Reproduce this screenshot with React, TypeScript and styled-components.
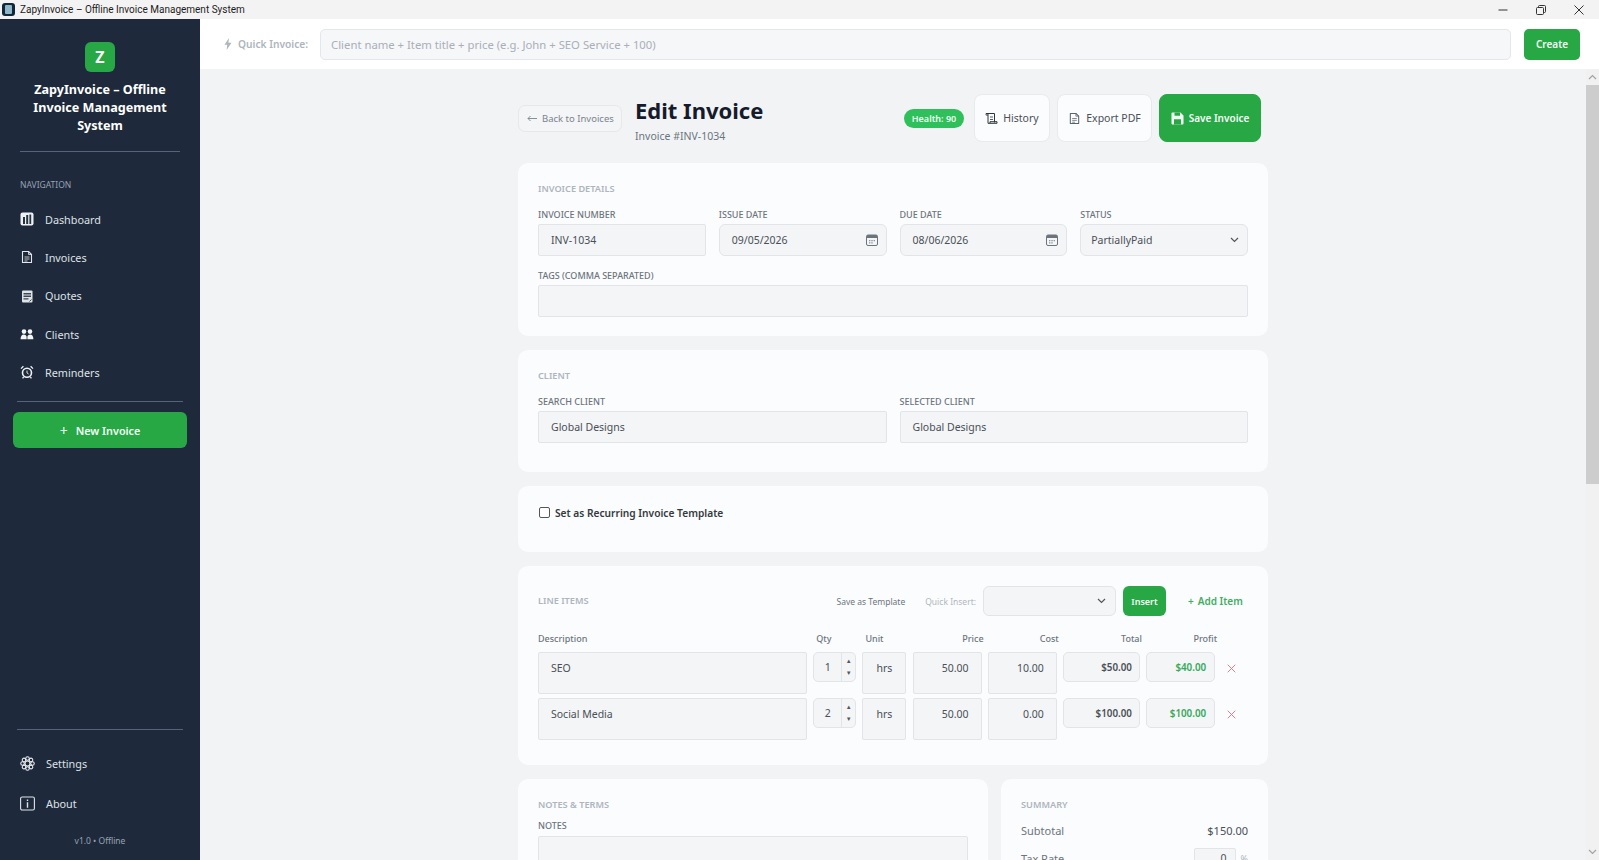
import { ReactNode } from 'react'
import styled, { createGlobalStyle } from 'styled-components'

const GlobalStyle = createGlobalStyle`
  html, body {
    margin: 0;
    height: 100%;
    overflow: hidden;
  }
  body {
    font-family: "Noto Sans", "Open Sans", "Liberation Sans", sans-serif;
    color: #212529;
    background: #f1f3f5;
  }
  * {
    box-sizing: border-box;
  }
`

const Window = styled.div`
  display: flex;
  flex-direction: column;
  height: 100vh;
  overflow: hidden;
`

const TitleBar = styled.header`
  display: flex;
  align-items: center;
  flex: 0 0 19px;
  padding-right: 1px;
  background: #f3f3f3;
  font-family: Roboto, "Noto Sans", sans-serif;
  font-size: 10px;
  color: #1c1c1c;
`

const AppGlyph = styled.span`
  display: flex;
  align-items: center;
  justify-content: center;
  width: 13px;
  height: 13px;
  margin: 0 5px 0 2px;
  border-radius: 3px;
  background: #13273a;
`

const AppGlyphInner = styled.span`
  width: 7px;
  height: 9px;
  border-radius: 1px;
  background: #8fb6c9;
`

const WindowTitle = styled.span`
  flex: 1;
`

const WindowButton = styled.span`
  display: flex;
  align-items: center;
  justify-content: center;
  width: 38px;
  height: 19px;
  color: #333;
`

const Body = styled.div`
  display: flex;
  flex: 1;
  min-height: 0;
`

const Sidebar = styled.aside`
  display: flex;
  flex-direction: column;
  flex: 0 0 200px;
  background: #1e2a3b;
  color: #e9ecef;
`

const Brand = styled.div`
  display: flex;
  flex-direction: column;
  align-items: center;
  padding: 23px 20px 0;
`

const LogoMark = styled.div`
  display: flex;
  align-items: center;
  justify-content: center;
  width: 30px;
  height: 30px;
  border-radius: 6px;
  background: #28a745;
  color: #fff;
  font-size: 16px;
  font-weight: 700;
`

const BrandName = styled.div`
  margin-top: 9px;
  font-size: 12.6px;
  line-height: 18px;
  font-weight: 700;
  text-align: center;
  color: #fff;
`

const Rule = styled.hr<{ $inset: number; $top: number }>`
  align-self: stretch;
  height: 1px;
  margin: ${({ $top }) => $top}px ${({ $inset }) => $inset}px 0;
  border: 0;
  background: #56637a;
`

const NavHeading = styled.div`
  margin: 27px 0 9px 20px;
  font-size: 8.5px;
  line-height: 12px;
  color: #98a2b3;
`

const NavList = styled.nav`
  display: flex;
  flex-direction: column;
`

const NavItem = styled.a`
  display: flex;
  align-items: center;
  gap: 11px;
  height: 38.3px;
  padding-left: 20px;
  font-size: 10.8px;
  color: #dee2e6;
`

const NewInvoice = styled.button`
  display: flex;
  align-items: center;
  justify-content: center;
  gap: 8px;
  height: 36px;
  margin: 10px 13px 0;
  border: 0;
  border-radius: 6px;
  background: #28a745;
  color: #f2fff5;
  font: 600 10.8px "Noto Sans", sans-serif;
`

const PlusMark = styled.span`
  font-size: 14px;
  font-weight: 400;
`

const SidebarFooter = styled.div`
  display: flex;
  flex-direction: column;
  margin-top: auto;
`

const FooterItem = styled(NavItem)`
  height: 40px;
`

const FooterList = styled.div`
  display: flex;
  flex-direction: column;
  margin-top: 13px;
`

const Version = styled.div`
  margin: 12px 0 13px;
  font-size: 8.5px;
  line-height: 12px;
  text-align: center;
  color: #98a2b3;
`

const Workspace = styled.div`
  display: flex;
  flex-direction: column;
  flex: 1;
  min-width: 0;
`

const TopBar = styled.div`
  display: flex;
  align-items: center;
  flex: 0 0 50px;
  padding: 0 19px 0 24px;
  background: #fff;
`

const QuickLabel = styled.span`
  display: flex;
  align-items: center;
  gap: 6px;
  margin-right: 12px;
  font-size: 10.2px;
  font-weight: 600;
  color: #adb5bd;
`

const QuickInput = styled.div`
  display: flex;
  align-items: center;
  flex: 1;
  height: 31px;
  padding: 0 10px;
  border: 1px solid #e3e6ea;
  border-radius: 5px;
  background: #f6f7f9;
  font-size: 11.3px;
  color: #a9afb6;
`

const GreenButton = styled.button<{ $w: number; $h: number; $r: number }>`
  flex: 0 0 ${({ $w }) => $w}px;
  height: ${({ $h }) => $h}px;
  padding: 0;
  border: 0;
  border-radius: ${({ $r }) => $r}px;
  background: #28a745;
  color: #f2fff5;
  font: 600 9px "Noto Sans", sans-serif;
`

const CreateButton = styled(GreenButton)`
  margin-left: 13px;
  font-size: 10px;
`

const ContentRow = styled.div`
  display: flex;
  flex: 1;
  min-height: 0;
`

const Scroller = styled.main`
  flex: 1;
  min-width: 0;
  overflow: hidden;
  background: #f1f3f5;
`

const Page = styled.div`
  display: flex;
  flex-direction: column;
  gap: 14px;
  width: 750px;
  margin: 0 auto;
  padding-top: 25px;
`

const PageHead = styled.div`
  display: flex;
  align-items: flex-start;
  height: 48px;
  margin-bottom: 7px;
  padding-right: 7px;
`

const BackButton = styled.button`
  display: flex;
  align-items: center;
  gap: 5px;
  width: 104px;
  height: 27px;
  margin: 11px 13px 0 0;
  padding: 0 0 0 8px;
  border: 1px solid #e6e8ec;
  border-radius: 7px;
  background: #f4f5f7;
  color: #7b838c;
  font: 400 9.5px "Noto Sans", sans-serif;
`

const TitleBlock = styled.div`
  flex: 1;
`

const PageTitle = styled.h1`
  margin: 0 0 2px;
  font-size: 22px;
  line-height: 33px;
  font-weight: 700;
  color: #161b2b;
`

const PageSub = styled.div`
  font-size: 10.5px;
  line-height: 14px;
  color: #6c757d;
`

const HealthPill = styled.span`
  display: flex;
  align-items: center;
  justify-content: center;
  width: 60px;
  height: 19px;
  margin: 15px 3px 0 0;
  border-radius: 10px;
  background: #2fbf5b;
  color: #e9fff0;
  font-size: 9px;
  font-weight: 600;
`

const HeadButton = styled.button<{ $w: number; $primary?: boolean }>`
  display: flex;
  align-items: center;
  justify-content: center;
  gap: 5px;
  flex: 0 0 ${({ $w }) => $w}px;
  height: 48px;
  margin-left: 7px;
  padding: 0;
  border: 1px solid ${({ $primary }) => ($primary ? '#28a745' : '#e8eaee')};
  border-radius: 8px;
  background: ${({ $primary }) => ($primary ? '#28a745' : '#fbfcfd')};
  color: ${({ $primary }) => ($primary ? '#f2fff5' : '#495057')};
  font: ${({ $primary }) => ($primary ? 600 : 400)} ${({ $primary }) => ($primary ? 10 : 10.5)}px "Noto Sans", sans-serif;
`

const Card = styled.section<{ $pb?: number }>`
  padding: 20px 20px ${({ $pb }) => $pb ?? 20}px;
  border-radius: 10px;
  background: #fbfcfd;
`

const CardTitle = styled.h2<{ $mb?: number }>`
  margin: 0 0 ${({ $mb }) => $mb ?? 14}px;
  font-size: 9.2px;
  line-height: 12px;
  font-weight: 600;
  color: #adb5bd;
  text-transform: uppercase;
`

const FieldGrid = styled.div<{ $cols: number }>`
  display: grid;
  grid-template-columns: repeat(${({ $cols }) => $cols}, 1fr);
  gap: 14px 13px;
`

const Field = styled.div<{ $span?: number }>`
  display: flex;
  flex-direction: column;
  grid-column: span ${({ $span }) => $span ?? 1};
`

const FieldLabel = styled.label`
  margin-bottom: 3px;
  font-size: 9px;
  line-height: 12px;
  font-weight: 500;
  color: #6c757d;
  text-transform: uppercase;
`

const InputBox = styled.div<{ $r?: number; $h?: number; $right?: boolean; $bold?: boolean; $green?: boolean; $top?: boolean; $px?: number; $pr?: number }>`
  display: flex;
  align-items: ${({ $top }) => ($top ? 'flex-start' : 'center')};
  justify-content: ${({ $right }) => ($right ? 'flex-end' : 'space-between')};
  height: ${({ $h }) => $h ?? 32}px;
  padding: ${({ $top }) => ($top ? '8px' : '0')} ${({ $px, $pr }) => $pr ?? $px ?? 12}px 0 ${({ $px }) => $px ?? 12}px;
  border: 1px solid #e2e4e8;
  border-radius: ${({ $r }) => $r ?? 2}px;
  background: #f4f5f6;
  font-size: ${({ $bold }) => ($bold ? 9.8 : 10.5)}px;
  font-weight: ${({ $bold }) => ($bold ? 600 : 400)};
  color: ${({ $green }) => ($green ? '#36a85a' : '#495057')};
`

const CheckRow = styled.label`
  display: flex;
  align-items: center;
  gap: 5px;
  height: 13px;
  margin: 0 0 13px 1px;
  font-size: 10.2px;
  font-weight: 600;
  color: #343a40;
`

const CheckBox = styled.span`
  width: 11px;
  height: 11px;
  border: 1px solid #555;
  border-radius: 2px;
  background: #fff;
`

const ItemsBar = styled.div`
  display: flex;
  align-items: center;
  height: 30px;
  margin-bottom: 17px;
`

const ItemsTitle = styled(CardTitle)`
  flex: 1;
  margin: 0;
`

const BarText = styled.span<{ $muted?: boolean; $gap: number }>`
  margin-right: ${({ $gap }) => $gap}px;
  font-size: 8.5px;
  color: ${({ $muted }) => ($muted ? '#b0b6bd' : '#6c757d')};
`

const SelectBox = styled(InputBox)`
  flex: 0 0 133px;
  margin-right: 7px;
`

const AddItem = styled.span`
  display: flex;
  gap: 4px;
  width: 54px;
  margin: 0 6px 0 22px;
  font-size: 10px;
  font-weight: 600;
  white-space: nowrap;
  color: #3fae63;
`

const ItemGrid = styled.div`
  display: grid;
  grid-template-columns: 269px 43px 44px 69px 69px 77px 69px 1fr;
  column-gap: 6.2px;
  align-items: start;
`

const HeadCell = styled.div<{ $right?: boolean; $pl?: number }>`
  height: 12px;
  margin-bottom: 7px;
  margin-right: ${({ $right }) => ($right ? '-2px' : '0')};
  padding-left: ${({ $pl }) => $pl ?? 0}px;
  font-size: 9px;
  line-height: 12px;
  font-weight: 500;
  text-align: ${({ $right }) => ($right ? 'right' : 'left')};
  color: #6c757d;
`

const ItemRows = styled.div`
  display: flex;
  flex-direction: column;
  gap: 4px;
`

const Stepper = styled.div`
  display: flex;
  height: 30px;
  border: 1px solid #e2e4e8;
  border-radius: 5px;
  background: #f4f5f6;
  font-size: 10.5px;
  color: #495057;
`

const StepValue = styled.span`
  display: flex;
  align-items: center;
  justify-content: center;
  flex: 1;
`

const StepArrows = styled.span`
  display: flex;
  flex-direction: column;
  align-items: center;
  justify-content: space-evenly;
  flex: 0 0 14px;
  border-left: 1px solid #e2e4e8;
  font-size: 6px;
  line-height: 6px;
  color: #555;
`

const CenterText = styled.span`
  flex: 1;
  text-align: center;
`

const RemoveCell = styled.div`
  display: flex;
  padding: 12px 0 0 6px;
`

const BottomGrid = styled.div`
  display: grid;
  grid-template-columns: 470px 267px;
  gap: 13px;
`

const NotesLabel = styled(FieldLabel)`
  display: block;
  margin: -5px 0 4px;
`

const SummaryRow = styled.div`
  display: flex;
  align-items: center;
  justify-content: space-between;
  margin-bottom: 10px;
  font-size: 11px;
  color: #6c757d;
`

const SummaryValue = styled.span`
  font-size: 11px;
  color: #495057;
`

const TaxInput = styled(InputBox)`
  width: 42px;
  margin-left: auto;
  margin-right: 5px;
`

const TaxCell = styled.span`
  display: flex;
  align-items: center;
  flex: 1;
  font-size: 9px;
  color: #adb5bd;
`

const ScrollRail = styled.div`
  display: flex;
  flex-direction: column;
  flex: 0 0 13px;
  background: #f1f1f1;
`

const ScrollArrow = styled.span<{ $end?: boolean }>`
  display: flex;
  align-items: center;
  justify-content: center;
  flex: 0 0 16px;
  margin-top: ${({ $end }) => ($end ? 'auto' : '0')};
  color: #a3a3a3;
`

const ScrollThumb = styled.span`
  flex: 0 0 399px;
  background: #cdcdcd;
`

const IconSlot = styled.svg`
  flex: none;
  display: block;
`

type IconProps = { size?: number; color?: string }

function DashboardIcon() {
  return (
    <IconSlot width="14" height="14" viewBox="0 0 14 14">
      <rect x="0.5" y="0.5" width="13" height="13" rx="2" fill="#eef1f4" />
      <path d="M3 5h2v7H3zM6.2 3h2v9h-2zM9.4 2.5h1.8v9.5H9.4z" fill="#26323f" />
    </IconSlot>
  )
}

function DocIcon({ size = 14, color = '#e4e8ec' }: IconProps) {
  return (
    <IconSlot width={size} height={size} viewBox="0 0 14 14" fill="none" stroke={color} strokeWidth="1.1">
      <path d="M2.5 1.5h6l3 3v8h-9z" strokeLinejoin="round" />
      <path d="M8.5 1.5v3h3M4.5 7h5M4.5 9h5M4.5 11h3" strokeWidth="0.8" />
    </IconSlot>
  )
}

function QuotesIcon() {
  return (
    <IconSlot width="14" height="14" viewBox="0 0 14 14">
      <rect x="2" y="1.5" width="10.5" height="12" rx="1" fill="#dfe3e8" />
      <path d="M3.5 4h7.5v1.4H3.5zM3.5 6.6h7.5V8H3.5zM3.5 9.2h5v1.2h-5z" fill="#3b4757" />
      <path d="M9.5 12.5l2-2" stroke="#3b4757" strokeWidth="1" />
    </IconSlot>
  )
}

function ClientsIcon() {
  return (
    <IconSlot width="14" height="14" viewBox="0 0 14 14" fill="#f3f5f7">
      <circle cx="4" cy="4.6" r="2.3" />
      <circle cx="10" cy="4.6" r="2.3" />
      <path d="M0.6 12.3c0-3 1.2-4.8 3.2-4.8 1.3 0 2.3.7 2.8 2v2.8zM7.4 12.3V9.5c.5-1.3 1.5-2 2.8-2 2 0 3.2 1.8 3.2 4.8z" />
    </IconSlot>
  )
}

function AlarmIcon() {
  return (
    <IconSlot width="14" height="14" viewBox="0 0 14 14" fill="none" stroke="#eef1f4">
      <circle cx="7" cy="7.8" r="4.5" strokeWidth="1.6" />
      <path d="M7 5.5v2.5l1.6 1" strokeWidth="0.9" />
      <path d="M1 3.6L3.4 1.2M13 3.6l-2.4-2.4M3.6 12l-1 1.3M10.4 12l1 1.3" strokeWidth="1.3" />
    </IconSlot>
  )
}

function SettingsIcon() {
  const petals = [0, 45, 90, 135, 180, 225, 270, 315]
  return (
    <IconSlot width="15" height="15" viewBox="0 0 16 16" fill="none" stroke="#eef1f4" strokeWidth="1.1">
      <circle cx="8" cy="8" r="2.6" />
      {petals.map((deg) => (
        <circle key={deg} cx="8" cy="2.7" r="1.9" transform={`rotate(${deg} 8 8)`} />
      ))}
    </IconSlot>
  )
}

function InfoIcon() {
  return (
    <IconSlot width="15" height="15" viewBox="0 0 15 15" fill="none" stroke="#dfe3e8">
      <rect x="0.6" y="1" width="13.8" height="13" rx="1.6" strokeWidth="1.1" />
      <path d="M7.5 3.5v1.6M7.5 6.3v5.4" strokeWidth="1.4" />
    </IconSlot>
  )
}

function BoltIcon() {
  return (
    <IconSlot width="8" height="12" viewBox="0 0 8 12">
      <path d="M5 0L0.5 6.8h2.8L2.6 12 7.5 4.8H4.4z" fill="#adb5bd" />
    </IconSlot>
  )
}

function ScrollIcon() {
  return (
    <IconSlot width="13" height="13" viewBox="0 0 13 13" fill="none" stroke="#30363c" strokeWidth="1">
      <path d="M1 1.5h8.5v9" />
      <path d="M3 1.5v9.8h9v-1.6H5v1.6" />
      <path d="M1 1.5v1.6h2M5 5h3M5 7.5h3" strokeWidth="0.8" />
    </IconSlot>
  )
}

function SaveIcon() {
  return (
    <IconSlot width="13" height="13" viewBox="0 0 13 13">
      <path d="M1.5 0.5h8l3 3v8a1 1 0 0 1-1 1h-10a1 1 0 0 1-1-1v-10a1 1 0 0 1 1-1z" fill="#f2fff5" />
      <path d="M3.5 0.5h5.5v3.2H3.5zM3 7.3h7v5.2H3z" fill="#28a745" />
    </IconSlot>
  )
}

function CalendarIcon() {
  return (
    <IconSlot width="12" height="12" viewBox="0 0 12 12">
      <rect x="0.5" y="1" width="11" height="10.5" rx="1.5" fill="none" stroke="#6c757d" />
      <path d="M0.5 2.5a1.5 1.5 0 0 1 1.5-1.5h8a1.5 1.5 0 0 1 1.5 1.5V4h-11z" fill="#6c757d" />
      <path d="M3 6h1.4v1.2H3zM5.3 6h1.4v1.2H5.3zM7.6 6H9v1.2H7.6zM3 8.2h1.4v1.2H3zM5.3 8.2h1.4v1.2H5.3z" fill="#8f969d" />
    </IconSlot>
  )
}

function BackArrow() {
  return (
    <IconSlot width="10" height="7" viewBox="0 0 10 7" fill="none" stroke="#7b838c" strokeWidth="0.9">
      <path d="M10 3.5H1M3.5 1L1 3.5 3.5 6" />
    </IconSlot>
  )
}

function ChevronDown({ color = '#555' }: IconProps) {
  return (
    <IconSlot width="9" height="6" viewBox="0 0 9 6" fill="none" stroke={color} strokeWidth="1.2">
      <path d="M1 1l3.5 3.5L8 1" />
    </IconSlot>
  )
}

function ChevronUp() {
  return (
    <IconSlot width="9" height="6" viewBox="0 0 9 6" fill="none" stroke="#a3a3a3" strokeWidth="1.2">
      <path d="M1 5l3.5-3.5L8 5" />
    </IconSlot>
  )
}

function RemoveIcon() {
  return (
    <IconSlot width="9" height="9" viewBox="0 0 9 9" stroke="#e57f87" strokeWidth="1">
      <path d="M0.7 0.7l7.6 7.6M8.3 0.7L0.7 8.3" />
    </IconSlot>
  )
}

function MinimizeIcon() {
  return (
    <IconSlot width="10" height="10" viewBox="0 0 10 10" stroke="currentColor">
      <path d="M0.5 5h9" />
    </IconSlot>
  )
}

function RestoreIcon() {
  return (
    <IconSlot width="10" height="10" viewBox="0 0 10 10" fill="none" stroke="currentColor">
      <rect x="0.5" y="2.5" width="7" height="7" rx="1" />
      <path d="M2.5 2.5V1.5a1 1 0 0 1 1-1h5a1 1 0 0 1 1 1v5a1 1 0 0 1-1 1h-1" />
    </IconSlot>
  )
}

function CloseIcon() {
  return (
    <IconSlot width="10" height="10" viewBox="0 0 10 10" stroke="currentColor">
      <path d="M0.5 0.5l9 9M9.5 0.5l-9 9" />
    </IconSlot>
  )
}

type LineItem = {
  description: string
  qty: number
  price: string
  cost: string
  total: string
  profit: string
}

const lineItems: LineItem[] = [
  { description: 'SEO', qty: 1, price: '50.00', cost: '10.00', total: '$50.00', profit: '$40.00' },
  { description: 'Social Media', qty: 2, price: '50.00', cost: '0.00', total: '$100.00', profit: '$100.00' },
]

const navItems: { label: string; icon: ReactNode }[] = [
  { label: 'Dashboard', icon: <DashboardIcon /> },
  { label: 'Invoices', icon: <DocIcon /> },
  { label: 'Quotes', icon: <QuotesIcon /> },
  { label: 'Clients', icon: <ClientsIcon /> },
  { label: 'Reminders', icon: <AlarmIcon /> },
]

function ItemRow({ item }: { item: LineItem }) {
  return (
    <ItemGrid>
      <InputBox $h={42} $top>{item.description}</InputBox>
      <Stepper>
        <StepValue>{item.qty}</StepValue>
        <StepArrows>
          <span>▲</span>
          <span>▼</span>
        </StepArrows>
      </Stepper>
      <InputBox $h={42} $top $px={4}><CenterText>hrs</CenterText></InputBox>
      <InputBox $h={42} $top $right>{item.price}</InputBox>
      <InputBox $h={42} $top $right>{item.cost}</InputBox>
      <InputBox $h={30} $r={5} $right $px={7} $bold>{item.total}</InputBox>
      <InputBox $h={30} $r={5} $right $px={8} $bold $green>{item.profit}</InputBox>
      <RemoveCell><RemoveIcon /></RemoveCell>
    </ItemGrid>
  )
}

function App() {
  return (
    <Window>
      <GlobalStyle />
      <TitleBar>
        <AppGlyph><AppGlyphInner /></AppGlyph>
        <WindowTitle>ZapyInvoice – Offline Invoice Management System</WindowTitle>
        <WindowButton><MinimizeIcon /></WindowButton>
        <WindowButton><RestoreIcon /></WindowButton>
        <WindowButton><CloseIcon /></WindowButton>
      </TitleBar>
      <Body>
        <Sidebar>
          <Brand>
            <LogoMark>Z</LogoMark>
            <BrandName>ZapyInvoice – Offline Invoice Management System</BrandName>
          </Brand>
          <Rule $inset={20} $top={16} />
          <NavHeading>NAVIGATION</NavHeading>
          <NavList>
            {navItems.map((item) => (
              <NavItem key={item.label}>
                {item.icon}
                {item.label}
              </NavItem>
            ))}
          </NavList>
          <Rule $inset={17} $top={10} />
          <NewInvoice>
            <PlusMark>+</PlusMark>
            New Invoice
          </NewInvoice>
          <SidebarFooter>
            <Rule $inset={17} $top={0} />
            <FooterList>
              <FooterItem><SettingsIcon />Settings</FooterItem>
              <FooterItem><InfoIcon />About</FooterItem>
            </FooterList>
            <Version>v1.0 • Offline</Version>
          </SidebarFooter>
        </Sidebar>
        <Workspace>
          <TopBar>
            <QuickLabel>
              <BoltIcon />
              Quick Invoice:
            </QuickLabel>
            <QuickInput>Client name + Item title + price (e.g. John + SEO Service + 100)</QuickInput>
            <CreateButton $w={56} $h={31} $r={5}>Create</CreateButton>
          </TopBar>
          <ContentRow>
            <Scroller>
              <Page>
                <PageHead>
                  <BackButton><BackArrow />Back to Invoices</BackButton>
                  <TitleBlock>
                    <PageTitle>Edit Invoice</PageTitle>
                    <PageSub>Invoice #INV-1034</PageSub>
                  </TitleBlock>
                  <HealthPill>Health: 90</HealthPill>
                  <HeadButton $w={76}><ScrollIcon />History</HeadButton>
                  <HeadButton $w={95}><DocIcon size={13} color="#5a626a" />Export PDF</HeadButton>
                  <HeadButton $w={102} $primary><SaveIcon />Save Invoice</HeadButton>
                </PageHead>

                <Card $pb={19}>
                  <CardTitle>Invoice Details</CardTitle>
                  <FieldGrid $cols={4}>
                    <Field>
                      <FieldLabel>Invoice Number</FieldLabel>
                      <InputBox>INV-1034</InputBox>
                    </Field>
                    <Field>
                      <FieldLabel>Issue Date</FieldLabel>
                      <InputBox $r={6} $pr={8}>09/05/2026<CalendarIcon /></InputBox>
                    </Field>
                    <Field>
                      <FieldLabel>Due Date</FieldLabel>
                      <InputBox $r={6} $pr={8}>08/06/2026<CalendarIcon /></InputBox>
                    </Field>
                    <Field>
                      <FieldLabel>Status</FieldLabel>
                      <InputBox $r={6} $px={10} $pr={8}>PartiallyPaid<ChevronDown /></InputBox>
                    </Field>
                    <Field $span={4}>
                      <FieldLabel>Tags (comma separated)</FieldLabel>
                      <InputBox />
                    </Field>
                  </FieldGrid>
                </Card>

                <Card $pb={29}>
                  <CardTitle>Client</CardTitle>
                  <FieldGrid $cols={2}>
                    <Field>
                      <FieldLabel>Search Client</FieldLabel>
                      <InputBox>Global Designs</InputBox>
                    </Field>
                    <Field>
                      <FieldLabel>Selected Client</FieldLabel>
                      <InputBox>Global Designs</InputBox>
                    </Field>
                  </FieldGrid>
                </Card>

                <Card>
                  <CheckRow>
                    <CheckBox />
                    Set as Recurring Invoice Template
                  </CheckRow>
                </Card>

                <Card $pb={25}>
                  <ItemsBar>
                    <ItemsTitle>Line Items</ItemsTitle>
                    <BarText $gap={20}>Save as Template</BarText>
                    <BarText $muted $gap={7}>Quick Insert:</BarText>
                    <SelectBox $h={30} $r={6} $pr={9}>
                      <span />
                      <ChevronDown />
                    </SelectBox>
                    <GreenButton $w={43} $h={30} $r={6}>Insert</GreenButton>
                    <AddItem><span>+</span>Add Item</AddItem>
                  </ItemsBar>
                  <ItemGrid>
                    <HeadCell>Description</HeadCell>
                    <HeadCell $pl={3}>Qty</HeadCell>
                    <HeadCell $pl={3}>Unit</HeadCell>
                    <HeadCell $right>Price</HeadCell>
                    <HeadCell $right>Cost</HeadCell>
                    <HeadCell $right>Total</HeadCell>
                    <HeadCell $right>Profit</HeadCell>
                  </ItemGrid>
                  <ItemRows>
                    {lineItems.map((item) => (
                      <ItemRow key={item.description} item={item} />
                    ))}
                  </ItemRows>
                </Card>

                <BottomGrid>
                  <Card>
                    <CardTitle>Notes &amp; Terms</CardTitle>
                    <NotesLabel>Notes</NotesLabel>
                    <InputBox $h={60} />
                  </Card>
                  <Card>
                    <CardTitle $mb={12}>Summary</CardTitle>
                    <SummaryRow>
                      Subtotal
                      <SummaryValue>$150.00</SummaryValue>
                    </SummaryRow>
                    <SummaryRow>
                      Tax Rate
                      <TaxCell>
                        <TaxInput $h={20} $right $px={8}>0</TaxInput>
                        %
                      </TaxCell>
                    </SummaryRow>
                  </Card>
                </BottomGrid>
              </Page>
            </Scroller>
            <ScrollRail>
              <ScrollArrow><ChevronUp /></ScrollArrow>
              <ScrollThumb />
              <ScrollArrow $end><ChevronDown color="#a3a3a3" /></ScrollArrow>
            </ScrollRail>
          </ContentRow>
        </Workspace>
      </Body>
    </Window>
  )
}

export default App
